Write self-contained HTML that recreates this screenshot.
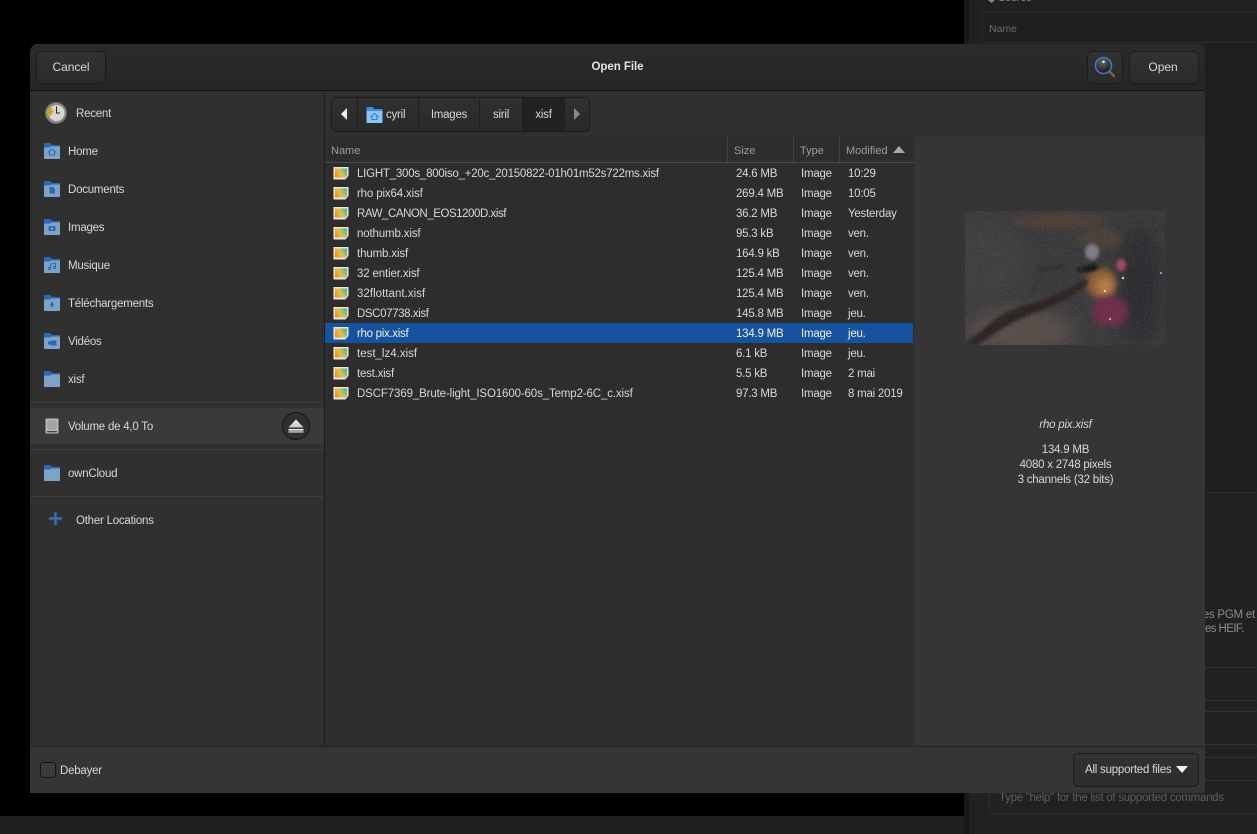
<!DOCTYPE html>
<html><head><meta charset="utf-8"><style>
*{box-sizing:border-box}
html,body{margin:0;padding:0;width:1257px;height:834px;overflow:hidden;background:#000;font-family:"Liberation Sans",sans-serif;font-size:11.5px;letter-spacing:-.23px;color:#d8d8d8}
.a{position:absolute;white-space:nowrap}
.btn{position:absolute;top:7px;height:33px;border:1px solid #1b1b1b;border-radius:5px;background:linear-gradient(#323232,#2b2b2b);color:#d8d8d8;text-align:center;line-height:31px;font-size:12px;letter-spacing:-.05px}
.side{position:absolute;left:0;width:294px;height:38px}
.side span{position:absolute;left:38px;top:13px;line-height:14px}
.side svg{position:absolute;left:14px;top:11px}
.row{position:absolute;left:0;width:588px;height:20px;line-height:22px}
.row span{position:absolute;top:0;white-space:nowrap}
.row svg{position:absolute;left:8px;top:3px}
.n{left:32px}.s{left:411px}.t{left:476px}.m{left:523px}
.sel{background:#15539e;color:#f0f0f0}
.seg{position:absolute;top:0;height:34px;border-right:1px solid #1f1f1f;text-align:center;line-height:34px;background:linear-gradient(#303030,#2a2a2a)}
.hd{position:absolute;top:0;height:25px;line-height:29px;color:#9c9c9c;font-size:11px;letter-spacing:0;border-right:1px solid #444;padding-left:6px}
</style></head><body>
<svg width="0" height="0" style="position:absolute"><defs>
<linearGradient id="fg" x1="0" y1=".7" x2="1" y2=".3"><stop offset="0" stop-color="#f08a30"/><stop offset=".45" stop-color="#e4c24c"/><stop offset="1" stop-color="#58b48c"/></linearGradient>
<symbol id="file" viewBox="0 0 16 14"><path d="M.5 1h15v9l-3 3.500H.5z" fill="#e8e8e0"/><rect x="2" y="2.500" width="12" height="9" fill="url(#fg)"/><path d="M15.500 9.500l-3.500 0 0 4z" fill="#c8c8c0"/></symbol>
<symbol id="folder" viewBox="0 0 16 16"><path d="M0 1a1 1 0 0 1 1-1h5l2 2h7a1 1 0 0 1 1 1v3H0z" fill="#2d68b4"/><path d="M0 3h6l1-1h8a1 1 0 0 1 1 1v12a1 1 0 0 1-1 1H1a1 1 0 0 1-1-1z" fill="#7fa3c6"/><path d="M0 1a1 1 0 0 1 1-1h5l2 2h7a1 1 0 0 1 1 1v.500H7L6 4.500H0z" fill="#2d68b4"/></symbol>
</defs></svg>

<!-- background window -->
<div class="a" style="left:0;top:816px;width:1257px;height:18px;background:#1f1f1f"></div>
<div class="a" style="left:964px;top:0;width:293px;height:834px;background:#212121;border-left:5px solid #181818"></div>
<div class="a" style="left:982px;top:12px;width:280px;height:31px;border:1px solid #2c2c2c;background:#1f1f1f"></div>
<div class="a" style="left:989px;top:23px;font-size:10.500px;letter-spacing:0;line-height:13px;color:#6c6c6c">Name</div>
<svg class="a" width="7" height="3" style="left:988px;top:0"><path d="M0 0h7L3.500 3z" fill="#888"/></svg>
<div class="a" style="left:998px;top:-8px;font-size:11px;line-height:13px;color:#8a8a8a">Source</div>
<div class="a" style="left:1205px;top:43px;width:52px;height:450px;background:#1e1e1e"></div>
<div class="a" style="left:1205px;top:492px;width:52px;height:1px;background:#2c2c2c"></div>
<div class="a" style="left:1205px;top:608px;height:15px;font-size:11.500px;color:#8c8c8c;line-height:15px;width:52px;overflow:hidden"><span style="position:absolute;right:2px;top:0">res PGM et</span></div>
<div class="a" style="left:1205px;top:622px;font-size:11.500px;color:#8c8c8c;line-height:15px;letter-spacing:-.6px">es HEIF.</div>
<div class="a" style="left:1205px;top:667px;width:52px;height:1px;background:#333"></div>
<div class="a" style="left:1205px;top:700px;width:52px;height:1px;background:#333"></div>
<div class="a" style="left:1205px;top:711px;width:52px;height:1px;background:#333"></div>
<div class="a" style="left:1205px;top:744px;width:52px;height:1px;background:#333"></div>
<div class="a" style="left:1205px;top:757px;width:52px;height:1px;background:#333"></div>
<div class="a" style="left:1205px;top:780px;width:52px;height:1px;background:#333"></div>
<div class="a" style="left:989px;top:793px;width:268px;height:21px;border:1px solid #2e2e2e;border-top:0;border-right:0;border-radius:0 0 0 5px"></div>
<div class="a" style="left:999px;top:791px;line-height:14px;font-size:11.500px;letter-spacing:-.28px;color:#5e5e5e">Type "help" for the list of supported commands</div>
<div class="a" style="left:0;top:0;width:964px;height:816px;background:#000"></div>

<!-- dialog -->
<div class="a" style="left:30px;top:44px;width:1175px;height:749px;background:#333;border-radius:8px 8px 0 0;overflow:hidden">
  <div class="a" style="left:0;top:0;width:1175px;height:47px;background:linear-gradient(#2b2b2b,#262626);border-bottom:1px solid #111"></div>
  <div class="btn" style="left:6px;width:70px">Cancel</div>
  <div class="a" style="left:0;width:1175px;top:16px;text-align:center;font-weight:bold;font-size:11.500px;letter-spacing:-.05px;line-height:14px;color:#e4e4e4">Open File</div>
  <div class="btn" style="left:1057px;width:36px">
    <svg width="24" height="24" viewBox="0 0 24 24" style="position:absolute;left:5px;top:3px"><defs><radialGradient id="lens" cx=".45" cy=".3" r=".7"><stop offset="0" stop-color="#666"/><stop offset="1" stop-color="#151518"/></radialGradient></defs><path d="M15.500 15.500l5.500 5.500" stroke="#77654b" stroke-width="2.500" stroke-linecap="round"/><circle cx="10.500" cy="10.500" r="8" fill="url(#lens)" stroke="#4a74d4" stroke-width="1.600"/><circle cx="10.500" cy="6.800" r="1.300" fill="#ddd"/></svg>
  </div>
  <div class="btn" style="left:1099px;width:70px;padding-right:2px">Open</div>

  <!-- sidebar -->
  <div class="a" style="left:0;top:47px;width:295px;height:655px;background:#303030;border-right:1px solid #1e1e1e"></div>
  <div class="side" style="top:50px"><svg width="24" height="24" viewBox="0 0 24 24" style="left:14px;top:7px"><circle cx="12" cy="12" r="10.500" fill="#8f8c84" stroke="#6a6862"/><circle cx="12.500" cy="12" r="8" fill="#d8d5cc"/><path d="M12.500 5.500V12h3.500" stroke="#222" fill="none" stroke-width="1"/><path d="M1.500 13l3-6h4l-1.500 2.500h3L5.500 16v-3z" fill="#c8a020"/></svg><span style="left:46px">Recent</span></div>
  <div class="side" style="top:88px"><svg width="16" height="16"><use href="#folder"/><path d="M8 6l3.500 3H10.500v3h-5V9H4.500z" fill="none" stroke="#2d68b4"/></svg><span>Home</span></div>
  <div class="side" style="top:126px"><svg width="16" height="16"><use href="#folder"/><path d="M5.500 6h3.500l2 2v4.500H5.500z" fill="#2d68b4"/></svg><span>Documents</span></div>
  <div class="side" style="top:164px"><svg width="16" height="16"><use href="#folder"/><rect x="4.500" y="7" width="7" height="5" rx="1" fill="#2d68b4"/><circle cx="8" cy="9.500" r="1.200" fill="#7fa3c6"/></svg><span>Images</span></div>
  <div class="side" style="top:202px"><svg width="16" height="16"><use href="#folder"/><path d="M6.500 11.500V7l5-1v4.500" fill="none" stroke="#2d68b4"/><circle cx="5.500" cy="11.500" r="1.200" fill="none" stroke="#2d68b4"/><circle cx="10.500" cy="10.500" r="1.200" fill="none" stroke="#2d68b4"/></svg><span>Musique</span></div>
  <div class="side" style="top:240px"><svg width="16" height="16"><use href="#folder"/><path d="M7 7h2v2.500h1.500L8 12.500 5.500 9.500H7z" fill="#2d68b4"/></svg><span>Téléchargements</span></div>
  <div class="side" style="top:278px"><svg width="16" height="16"><use href="#folder"/><path d="M4 8l2.500 1v-1.500h6v5h-6V11L4 12z" fill="#2d68b4"/></svg><span>Vidéos</span></div>
  <div class="side" style="top:316px"><svg width="16" height="16"><use href="#folder"/></svg><span>xisf</span></div>
  <div class="a" style="left:0;top:358px;width:294px;height:1px;background:#3c3c3c"></div>
  <div class="a" style="left:0;top:364px;width:294px;height:36px;background:#3a3a3a"></div>
  <div class="side" style="top:363px"><svg width="14" height="16" viewBox="0 0 14 16" style="left:15px;top:11px"><rect x=".5" y=".5" width="13" height="15" rx="1" fill="#b8b8b4"/><rect x="2" y="2" width="10" height="10" rx="3" fill="#a2a2a0"/><rect x="2" y="13" width="10" height="1.300" fill="#444"/></svg><span style="top:13px">Volume de 4,0 To</span></div>
  <div class="a" style="left:252px;top:368px;width:28px;height:28px;border-radius:50%;background:#303030;border:1px solid #141414"></div>
  <svg class="a" width="16" height="16" viewBox="0 0 16 16" style="left:258px;top:374px"><defs><linearGradient id="ej" x1="0" y1="0" x2="0" y2="1"><stop offset="0" stop-color="#f0f0f0"/><stop offset="1" stop-color="#c8c8c8"/></linearGradient></defs><path d="M8 1.500L15.500 9.500H.5z" fill="url(#ej)"/><rect x=".5" y="11" width="15" height="1.200" fill="#f4f4f4"/><rect x=".5" y="12.200" width="15" height="2.600" fill="#a8a8a8"/></svg>
  <div class="a" style="left:0;top:405px;width:294px;height:1px;background:#3c3c3c"></div>
  <div class="side" style="top:410px"><svg width="16" height="16"><use href="#folder"/></svg><span>ownCloud</span></div>
  <div class="a" style="left:0;top:452px;width:294px;height:1px;background:#3c3c3c"></div>
  <svg class="a" width="16" height="16" viewBox="0 0 16 16" style="left:18px;top:467px"><path d="M6 1h3v5h5v3H9v5H6V9H1V6h5z" fill="#3d70b0" stroke="#2a4060" stroke-width=".8"/></svg>
  <div class="a" style="left:46px;top:470px;line-height:14px">Other Locations</div>

  <!-- path bar area -->
  <div class="a" style="left:295px;top:47px;width:880px;height:46px;background:#303030"></div>
  <div class="a" style="left:301px;top:53px;width:259px;height:35px;border:1px solid #1b1b1b;border-radius:5px;overflow:hidden;background:#2d2d2d">
    <div class="seg" style="left:0;width:26px"><svg width="8" height="12" style="position:absolute;left:8px;top:10px"><path d="M7 0v12L1 6z" fill="#eee"/></svg></div>
    <div class="seg" style="left:26px;width:61px;text-align:left;padding-left:28px"><svg width="17" height="16" viewBox="0 0 16 16" style="position:absolute;left:8px;top:9px"><path d="M0 1a1 1 0 0 1 1-1h5l2 2h7a1 1 0 0 1 1 1v12a1 1 0 0 1-1 1H1a1 1 0 0 1-1-1z" fill="#3f8fe0"/><path d="M0 4h16v11a1 1 0 0 1-1 1H1a1 1 0 0 1-1-1z" fill="#8cc4f4"/><path d="M8 6.500l3.500 3H10.500v3h-5v-3H4.500z" fill="none" stroke="#2678d8"/></svg>cyril</div>
    <div class="seg" style="left:87px;width:61px">Images</div>
    <div class="seg" style="left:148px;width:43px">siril</div>
    <div class="seg" style="left:191px;width:42px;background:#222">xisf</div>
    <div class="seg" style="left:233px;width:25px;border-right:0"><svg width="8" height="12" style="position:absolute;left:8px;top:10px"><path d="M1 0v12l6-6z" fill="#8a8a8a"/></svg></div>
  </div>

  <!-- file list -->
  <div class="a" style="left:295px;top:93px;width:589px;height:609px;background:#2d2d2d">
    <div class="a" style="left:0;top:0;width:589px;height:26px;border-bottom:1px solid #4a4a4a;background:#2d2d2d">
      <div class="hd" style="left:0;width:403px">Name</div>
      <div class="hd" style="left:403px;width:66px">Size</div>
      <div class="hd" style="left:469px;width:46px">Type</div>
      <div class="hd" style="left:515px;width:74px;border-right:0">Modified<svg width="12" height="7" style="position:absolute;left:53px;top:9px"><path d="M6 0l6 7H0z" fill="#a8a8a8"/></svg></div>
    </div>
    <div style="position:absolute;left:0;top:26px;width:589px">
      <div class="row" style="top:0"><svg width="16" height="14"><use href="#file"/></svg><span class="n">LIGHT_300s_800iso_+20c_20150822-01h01m52s722ms.xisf</span><span class="s">24.6 MB</span><span class="t">Image</span><span class="m">10:29</span></div>
      <div class="row" style="top:20px"><svg width="16" height="14"><use href="#file"/></svg><span class="n" style="letter-spacing:-.15px">rho pix64.xisf</span><span class="s">269.4 MB</span><span class="t">Image</span><span class="m">10:05</span></div>
      <div class="row" style="top:40px"><svg width="16" height="14"><use href="#file"/></svg><span class="n" style="letter-spacing:-.45px">RAW_CANON_EOS1200D.xisf</span><span class="s">36.2 MB</span><span class="t">Image</span><span class="m">Yesterday</span></div>
      <div class="row" style="top:60px"><svg width="16" height="14"><use href="#file"/></svg><span class="n" style="letter-spacing:-.15px">nothumb.xisf</span><span class="s">95.3 kB</span><span class="t">Image</span><span class="m">ven.</span></div>
      <div class="row" style="top:80px"><svg width="16" height="14"><use href="#file"/></svg><span class="n" style="letter-spacing:-.13px">thumb.xisf</span><span class="s">164.9 kB</span><span class="t">Image</span><span class="m">ven.</span></div>
      <div class="row" style="top:100px"><svg width="16" height="14"><use href="#file"/></svg><span class="n" style="letter-spacing:-.15px">32 entier.xisf</span><span class="s">125.4 MB</span><span class="t">Image</span><span class="m">ven.</span></div>
      <div class="row" style="top:120px"><svg width="16" height="14"><use href="#file"/></svg><span class="n" style="letter-spacing:.03px">32flottant.xisf</span><span class="s">125.4 MB</span><span class="t">Image</span><span class="m">ven.</span></div>
      <div class="row" style="top:140px"><svg width="16" height="14"><use href="#file"/></svg><span class="n" style="letter-spacing:-.4px">DSC07738.xisf</span><span class="s">145.8 MB</span><span class="t">Image</span><span class="m">jeu.</span></div>
      <div class="row sel" style="top:160px"><svg width="16" height="14"><use href="#file"/></svg><span class="n" style="letter-spacing:-.3px">rho pix.xisf</span><span class="s">134.9 MB</span><span class="t">Image</span><span class="m">jeu.</span></div>
      <div class="row" style="top:180px"><svg width="16" height="14"><use href="#file"/></svg><span class="n" style="letter-spacing:0">test_lz4.xisf</span><span class="s">6.1 kB</span><span class="t">Image</span><span class="m">jeu.</span></div>
      <div class="row" style="top:200px"><svg width="16" height="14"><use href="#file"/></svg><span class="n">test.xisf</span><span class="s">5.5 kB</span><span class="t">Image</span><span class="m">2 mai</span></div>
      <div class="row" style="top:220px"><svg width="16" height="14"><use href="#file"/></svg><span class="n" style="letter-spacing:-.13px">DSCF7369_Brute-light_ISO1600-60s_Temp2-6C_c.xisf</span><span class="s">97.3 MB</span><span class="t">Image</span><span class="m">8 mai 2019</span></div>
    </div>
  </div>

  <!-- preview -->
  <div class="a" style="left:884px;top:93px;width:291px;height:609px;background:#353535"></div>
  <svg class="a" width="200" height="134" viewBox="0 0 200 134" style="left:935px;top:167px">
    <defs>
      <filter id="b1" x="-50%" y="-50%" width="200%" height="200%"><feGaussianBlur stdDeviation="1.500"/></filter>
      <filter id="b3" x="-50%" y="-50%" width="200%" height="200%"><feGaussianBlur stdDeviation="3.500"/></filter>
      <filter id="b6" x="-50%" y="-50%" width="200%" height="200%"><feGaussianBlur stdDeviation="9"/></filter>
      <filter id="noise" x="0" y="0" width="100%" height="100%"><feTurbulence type="fractalNoise" baseFrequency="1.400" numOctaves="1" seed="7"/><feColorMatrix values="0 0 0 0 1 0 0 0 0 1 0 0 0 0 1 5 0 0 0 -2.700"/></filter>
    </defs>
    <rect width="200" height="134" fill="#38383a"/>
    <ellipse cx="55" cy="120" rx="55" ry="24" fill="#544c46" filter="url(#b6)"/>
    <ellipse cx="20" cy="50" rx="40" ry="40" fill="#3e3e3e" filter="url(#b6)"/>
    <ellipse cx="175" cy="75" rx="22" ry="60" fill="#2c2c2e" filter="url(#b6)"/>
    <ellipse cx="95" cy="10" rx="45" ry="8" fill="#4b3e34" filter="url(#b3)"/>
    <ellipse cx="135" cy="28" rx="22" ry="10" fill="#4a3c34" filter="url(#b3)"/>
    <ellipse cx="136" cy="72" rx="15" ry="15" fill="#8e5d34" filter="url(#b3)"/>
    <ellipse cx="140" cy="76" rx="8" ry="10" fill="#b07a44" filter="url(#b3)"/>
    <ellipse cx="145" cy="100" rx="18" ry="15" fill="#6e2c46" filter="url(#b3)"/>
    <ellipse cx="156" cy="54" rx="5" ry="6" fill="#a04460" filter="url(#b1)"/>
    <ellipse cx="127" cy="41" rx="7" ry="8" fill="#7c7c84" filter="url(#b1)"/>
    <path d="M0 132q14-10 28-22t40-18q25-8 52-24l4 3q-18 18-52 30-26 10-40 20t-22 14z" fill="#2a2320" filter="url(#b1)"/>
    <path d="M70 58q14-4 30-4l-2 3q-14 3-26 3z" fill="#2e2a28" filter="url(#b1)"/>
    <path d="M112 58l19-5 3 4-6 3-16 0z" fill="#0e0c0c" filter="url(#b1)" />
    <circle cx="145" cy="108" r="1" fill="#ccc"/><circle cx="196" cy="62" r="1" fill="#a0c0e0"/><circle cx="140" cy="80" r="1.200" fill="#f0d8a0"/><circle cx="158" cy="67" r="1.200" fill="#e0d0c0"/>
    <rect width="200" height="134" filter="url(#noise)" opacity=".18"/>
  </svg>
  <div class="a" style="left:884px;width:303px;top:374px;text-align:center;font-style:italic;line-height:14px">rho pix.xisf</div>
  <div class="a" style="left:884px;width:303px;top:399px;text-align:center;line-height:15px">134.9 MB<br>4080 x 2748 pixels<br>3 channels (32 bits)</div>

  <!-- footer -->
  <div class="a" style="left:0;top:702px;width:1175px;height:47px;background:#353535;border-top:1px solid #222"></div>
  <div class="a" style="left:10px;top:718px;width:16px;height:16px;border:1px solid #141414;border-radius:3px;background:#3c3c3c"></div>
  <div class="a" style="left:30px;top:720px;line-height:14px">Debayer</div>
  <div class="a" style="left:1043px;top:709px;width:126px;height:34px;border:1px solid #1b1b1b;border-radius:5px;background:linear-gradient(#323232,#2c2c2c);line-height:33px;padding-left:11px">All supported files<svg width="12" height="7" style="position:absolute;left:102px;top:12px"><path d="M0 0h12L6 7z" fill="#f0f0f0"/></svg></div>
</div>
</body></html>
